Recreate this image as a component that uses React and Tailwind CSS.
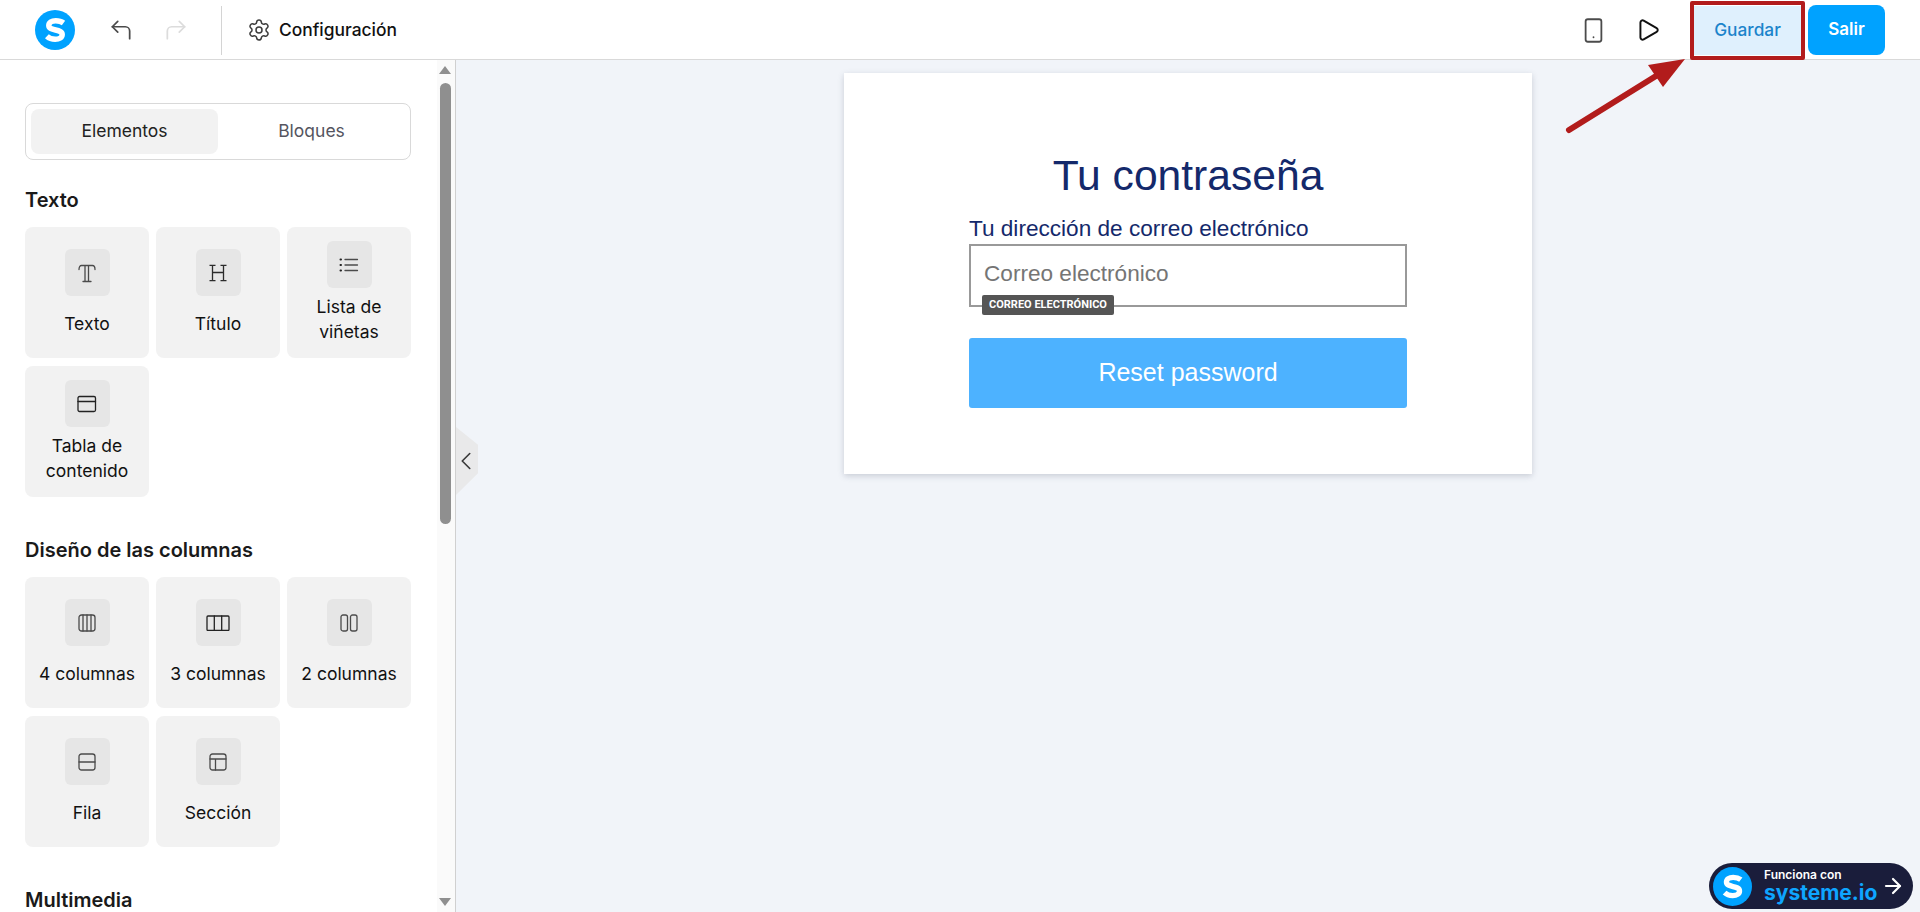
import { CornerUpLeft, CornerUpRight, Settings, Smartphone, Play, ChevronLeft, ArrowRight } from "lucide-react";

const inter = "font-['Inter',sans-serif]";

function SLogo({ size }) {
    return (
        <svg width={size} height={size} viewBox="0 0 40 40">
            <circle cx="20" cy="20" r="20" fill="#00a2ff" />
            <path d="M28.500 13c-2-1.500-4.800-2.300-7.800-2.300-4.200 0-6.900 1.800-6.900 4.800 0 6 13.400 3.100 13.400 9 0 3.100-2.900 4.800-7 4.800-3.300 0-6.300-1.100-8.300-3" fill="none" stroke="#fff" strokeWidth="5.500" />
        </svg>
    );
}

const iconProps = { fill: "none", stroke: "#4b4b4b", strokeWidth: 1.3, strokeLinecap: "round", strokeLinejoin: "round" };

const icons = {
    text: (
        <svg width="20" height="20" viewBox="0 0 20 20" {...iconProps}>
            <path d="M2 6.500C2 4 3 2.500 4.500 2.500h11C17 2.500 18 4 18 6.500M8 2.500V18M11.500 2.500V18M6 18.500h8" />
        </svg>
    ),
    title: (
        <svg width="20" height="20" viewBox="0 0 20 20" {...iconProps} stroke="#2b2b2b" strokeLinecap="butt">
            <path d="M4.500 2V18M15.500 2V18M4.500 9.500h11M1.500 2.300h6M12.500 2.300h6M1.500 17.700h6M12.500 17.700h6" />
        </svg>
    ),
    list: (
        <svg width="20" height="16" viewBox="0 0 20 16" {...iconProps}>
            <path d="M6 2.500h12.500M6 8h12.500M6 13.500h12.500" />
            <path d="M1.500 2.500h.5M1.500 8h.5M1.500 13.500h.5" strokeWidth="2" stroke="#222" />
        </svg>
    ),
    table: (
        <svg width="20" height="18" viewBox="0 0 20 18" {...iconProps} stroke="#222">
            <rect x="1" y="1.500" width="17.500" height="15" rx="1.500" />
            <path d="M1 6.500h17.500" />
        </svg>
    ),
    col4: (
        <svg width="18" height="18" viewBox="0 0 18 18" {...iconProps}>
            <rect x="1" y="1" width="16" height="16" rx="2.500" />
            <path d="M5 1v16M9 1v16M13 1v16" />
        </svg>
    ),
    col3: (
        <svg width="24" height="16" viewBox="0 0 24 16" {...iconProps} stroke="#222">
            <rect x="1" y="1" width="22" height="14.500" rx="1" />
            <path d="M8.300 1v14.500M15.700 1v14.500" />
        </svg>
    ),
    col2: (
        <svg width="18" height="18" viewBox="0 0 18 18" {...iconProps}>
            <rect x="1" y="1" width="6.500" height="16" rx="2" />
            <rect x="10.500" y="1" width="6.500" height="16" rx="2" />
        </svg>
    ),
    row: (
        <svg width="18" height="18" viewBox="0 0 18 18" {...iconProps}>
            <rect x="1" y="1" width="16" height="16" rx="2.500" />
            <path d="M1 9h16" />
        </svg>
    ),
    section: (
        <svg width="18" height="18" viewBox="0 0 18 18" {...iconProps}>
            <rect x="1" y="1" width="16" height="16" rx="2.500" />
            <path d="M1 6h16M6.500 6v11" />
        </svg>
    ),
};

const textItems = [
    { icon: "text", label: "Texto" },
    { icon: "title", label: "Título" },
    { icon: "list", label: "Lista de viñetas", two: true },
    { icon: "table", label: "Tabla de contenido", two: true },
];

const columnItems = [
    { icon: "col4", label: "4 columnas" },
    { icon: "col3", label: "3 columnas" },
    { icon: "col2", label: "2 columnas" },
    { icon: "row", label: "Fila" },
    { icon: "section", label: "Sección" },
];

function ItemCard({ icon, label, two }) {
    return (
        <div className="h-[131px] rounded-lg bg-[#f2f2f2] flex flex-col items-center justify-center">
            <div className="w-[45px] h-[47px] rounded-md bg-[#e6e6e6] flex items-center justify-center">
                {icons[icon]}
            </div>
            <div className={`${two ? "mt-[6px] w-[100px]" : "mt-[15px]"} text-center text-[17.500px] leading-[25px] text-[#111]`}>{label}</div>
        </div>
    );
}

function Section({ title, items, className }) {
    return (
        <section className={className}>
            <h2 className="text-[20px] leading-[28px] font-semibold text-[#1a1a1a] mb-[13px]">{title}</h2>
            {items && (
                <div className="grid grid-cols-[124px_124px_124px] gap-x-[7px] gap-y-2">
                    {items.map((it) => (
                        <ItemCard key={it.label} {...it} />
                    ))}
                </div>
            )}
        </section>
    );
}

export default function App() {
    return (
        <div className={`${inter} relative h-[912px] w-full overflow-hidden bg-[#f1f4f9] flex flex-col`}>
            {/* Top bar */}
            <header className="h-[60px] shrink-0 pt-px bg-white border-b border-[#d9d9d9] flex items-center">
                <div className="ml-[35px]"><SLogo size={40} /></div>
                <CornerUpLeft size={26} strokeWidth={1.6} className="ml-[33px] text-[#4b4b4b]" />
                <CornerUpRight size={26} strokeWidth={1.6} className="ml-[29px] text-[#dcdcdc]" />
                <div className="ml-[32px] h-[49px] w-px bg-[#d4d4d4]" />
                <Settings size={24} strokeWidth={1.5} className="ml-[25px] text-[#3c3c3c]" />
                <span className="ml-[8px] text-[17.400px] font-medium text-[#111]">Configuración</span>

                <div className="ml-auto flex items-center">
                    <Smartphone size={27} strokeWidth={1.6} className="text-[#4b4b4b]" />
                    <Play size={26} strokeWidth={1.8} className="ml-[28px] text-[#111]" />
                    <div className="relative ml-[33px]">
                        <button className="block h-[49px] w-[107px] bg-[#dff0fd] text-[17.300px] font-medium text-[#1b84cb]">Guardar</button>
                        <div className="absolute -left-1 -right-1 -top-[5px] -bottom-[5px] border-4 border-[#b21c1c] rounded-[2px]" />
                    </div>
                    <button className="ml-[7px] mr-[35px] h-[50px] w-[77px] rounded-lg bg-[#00a2ff] text-[17px] font-semibold text-white">Salir</button>
                </div>
            </header>

            <div className="flex-1 min-h-0 flex">
                {/* Sidebar */}
                <aside className="w-[456px] shrink-0 bg-white border-r border-[#d0d0d0] flex">
                    <div className="w-[437px] pl-[25px] pr-[26px] pt-[43px] overflow-hidden">
                        <div className="h-[57px] rounded-lg border border-[#d9d9d9] p-[5px] grid grid-cols-2 text-[17.500px]">
                            <div className="w-[187px] rounded-lg bg-[#f2f2f2] flex items-center justify-center text-[#222]">Elementos</div>
                            <div className="flex items-center justify-center text-[#55555f]">Bloques</div>
                        </div>
                        <Section title="Texto" items={textItems} className="mt-[26px]" />
                        <Section title="Diseño de las columnas" items={columnItems} className="mt-[39px]" />
                        <Section title="Multimedia" className="mt-[39px]" />
                    </div>
                    {/* Scrollbar */}
                    <div className="w-[18px] bg-[#fafafa] flex flex-col items-center pt-[6px] pb-[6px] pl-[2px] pr-1">
                        <div className="w-0 h-0 border-x-[6px] border-x-transparent border-b-[8px] border-b-[#8f8f8f]" />
                        <div className="mt-[9px] w-[11px] h-[441px] rounded-full bg-[#8f8f8f]" />
                        <div className="mt-auto w-0 h-0 border-x-[6px] border-x-transparent border-t-[8px] border-t-[#8f8f8f]" />
                    </div>
                </aside>

                {/* Canvas */}
                <main className="relative flex-1 min-w-0">
                    <div className="mx-auto mt-[13px] w-[688px] h-[401px] bg-white shadow-[0_2px_6px_rgba(60,70,90,0.22)] pt-[78px] font-['Liberation_Sans',Arial,sans-serif]">
                        <div className="mx-auto w-[438px]">
                            <h1 className="text-center text-[42.600px] leading-[48px] text-[#14296b]">Tu contraseña</h1>
                            <label className="block mt-[17px] text-[22.600px] leading-[26px] text-[#14296b]">Tu dirección de correo electrónico</label>
                            <div className="relative mt-[2px] h-[63px] border-2 border-[#999] pl-[13px] flex items-center pb-[4px] text-[22.600px] text-[#757575]">
                                Correo electrónico
                                <span className="absolute left-[11px] -bottom-[10px] h-5 px-[7px] rounded-[2px] bg-[#555] flex items-center text-[11px] font-bold text-white font-['Roboto',sans-serif]">CORREO ELECTRÓNICO</span>
                            </div>
                            <button className="mt-[31px] block w-full h-[70px] rounded-[3px] bg-[#4db2ff] text-[25px] text-white">Reset password</button>
                        </div>
                    </div>
                    {/* Collapse handle */}
                    <div className="absolute left-0 top-[367px] w-[22px] h-[68px] bg-[#e9e9ea] [clip-path:polygon(0_0,100%_26%,100%_68%,0_100%)] flex items-center">
                        <ChevronLeft size={30} strokeWidth={1.3} className="ml-[-5px] shrink-0 text-[#3a3a3a]" />
                    </div>
                </main>
            </div>

            {/* Red annotation arrow */}
            <svg className="absolute left-[1560px] top-[50px]" width="135" height="90" viewBox="0 0 135 90">
                <path d="M9 80 L96 26" stroke="#b21c1c" strokeWidth="6" strokeLinecap="round" />
                <path d="M125 9 L88 15 L103 37 Z" fill="#b21c1c" />
            </svg>

            {/* Powered by badge */}
            <div className="absolute left-[1709px] top-[863px] w-[204px] h-[46px] rounded-full bg-[#1a1d3b] flex items-center pl-1">
                <SLogo size={39} />
                <div className="ml-3 flex flex-col">
                    <span className="text-[12px] leading-[14px] font-semibold text-white">Funciona con</span>
                    <span className="text-[21px] leading-[22px] font-bold text-[#0ea5ff]">systeme.io</span>
                </div>
                <ArrowRight size={24} strokeWidth={2.2} className="ml-[4px] text-white" />
            </div>
        </div>
    );
}
